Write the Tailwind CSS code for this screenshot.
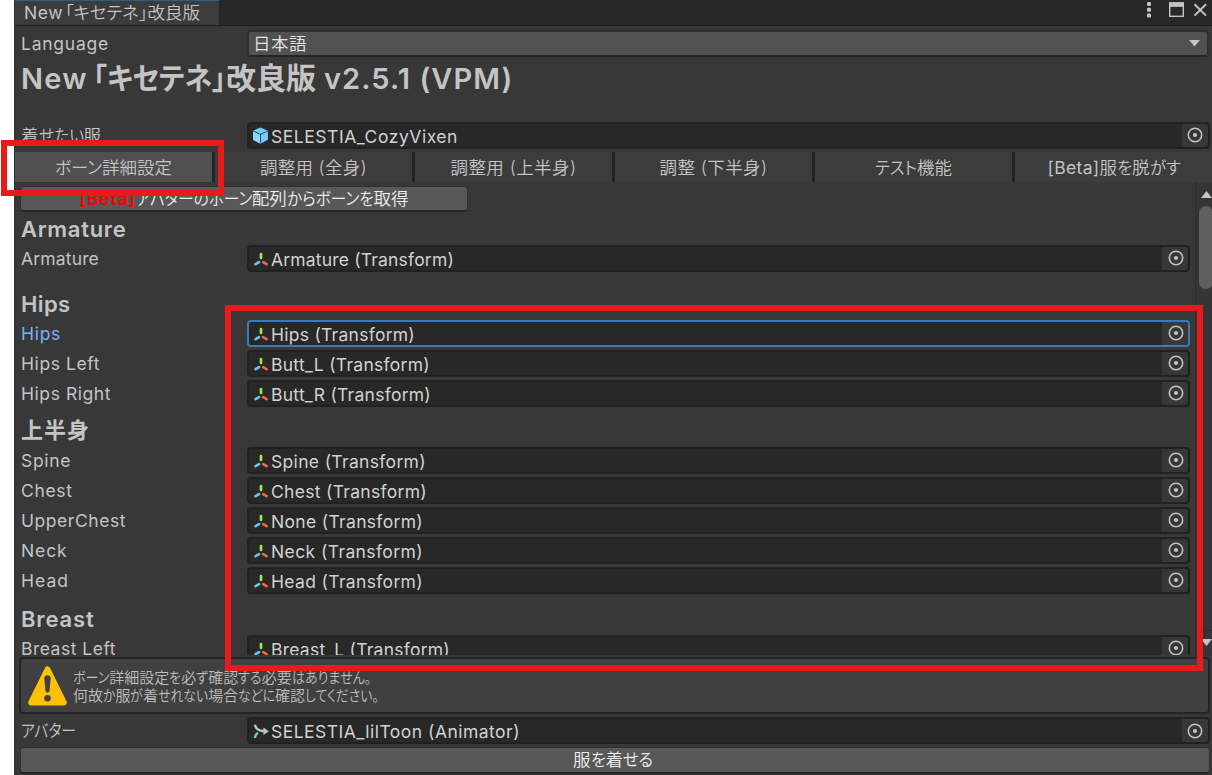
<!DOCTYPE html>
<html lang="ja">
<head>
<meta charset="utf-8">
<title>New「キセテネ」改良版</title>
<script src="https://cdn.jsdelivr.net/npm/@tailwindcss/browser@4"></script>
</head>
<body class="relative h-[775px] w-[1212px] overflow-hidden bg-white pl-[14px] font-['Inter','Noto_Sans_CJK_JP',sans-serif] text-[17.5px] leading-none text-[#c4c4c4]">

<svg class="hidden">
  <symbol id="axes" viewBox="0 0 16 16"><g fill="none" stroke-width="2.7" stroke-linecap="round"><path d="M8 3V7" stroke="#9be84e"/><path d="M6 11.2 2.6 13.200" stroke="#6cc3ee"/><path d="M10.2 11.100 13.6 13.100" stroke="#ee6a3e"/></g></symbol>
  <symbol id="cube" viewBox="0 0 16 16"><path d="M8 .4 15 3.5v8.6L8 15.8 1 12.1V3.5Z" fill="#74cdf7"/><path d="M1.4 3.9 8 7l6.6-3.1M8 7v8.4" fill="none" stroke="#2a4f66" stroke-width="1"/><path d="M1 4.4 7.5 7.5v8L1 12.1Z" fill="#8ad8fb"/></symbol>
  <symbol id="anim" viewBox="0 0 16 16"><g fill="none" stroke-width="2.4"><path d="M1.8 1.8C2.6 5 5 7.8 11 8.2" stroke="#c4c4c4"/><path d="M1.9 15c.2-2.2 1.1-4 3-5.2" stroke="#5fd9c0"/></g><path d="M10.4 4.400 15.800 8.200 10.400 12Z" fill="#c4c4c4"/></symbol>
  <symbol id="pick" viewBox="0 0 16 16"><circle cx="8" cy="8" r="6.700" fill="none" stroke="#c4c4c4" stroke-width="1.500"/><circle cx="8" cy="8" r="2.100" fill="#c4c4c4"/></symbol>
</svg>

<main class="flex h-full w-[1198px] flex-col border-l border-[#303030] bg-[#383838]">

  <header class="flex h-[26px] shrink-0 border-b border-[#202020] bg-[#282828]">
    <div class="flex w-[205px] items-center border-t border-r border-t-[#2c5d87] border-r-[#232323] bg-[#3c3c3c] pl-[9px]"><span data-w="39">New</span><span class="ml-[2px]" data-w="135">「キセテネ」改良版</span></div>
    <div class="ml-auto flex pt-[2px] pr-[4px]">
      <svg class="h-[16px] w-[64px]" viewBox="0 0 64 16"><g fill="#c4c4c4"><rect x="3" y="0" width="4" height="4" rx="1.200"/><rect x="3" y="5.700" width="4" height="4" rx="1.200"/><rect x="3" y="11.400" width="4" height="4" rx="1.200"/></g><rect x="25.700" y="1" width="13.600" height="13.300" fill="none" stroke="#c4c4c4" stroke-width="1.400"/><path d="M25 .3h15v4.600H25Z" fill="#c4c4c4"/><path d="M50.500 2.300 62 13.600M62 2.300 50.500 13.600" stroke="#c4c4c4" stroke-width="2"/></svg>
    </div>
  </header>

  <div class="mt-[4px] flex h-[27px] shrink-0 items-center pl-[6px]">
    <div class="w-[226px]"><span data-w="88">Language</span></div>
    <div class="flex h-[27px] w-[962px] items-center justify-between rounded-[4px] border-2 border-[#303030] border-b-[#242424] bg-[#515151] pr-[7px] pl-[4px] text-[#e4e4e4]"><span data-w="54">日本語</span><svg class="h-[7px] w-[11px]" viewBox="0 0 11 7"><path d="M0 0h11L5.500 6.500Z" fill="#c4c4c4"/></svg></div>
  </div>

  <h1 class="flex h-[43px] shrink-0 items-center pl-[6px] text-[29px] font-semibold"><span data-w="67">New</span><span class="ml-[5px] pb-[2px] text-[30px] font-bold" data-w="223">「キセテネ」改良版</span><span class="ml-[8px]" data-w="189">v2.5.1 (VPM)</span></h1>

  <div class="mt-[22px] flex h-[27px] shrink-0 items-center pl-[6px]">
    <div class="w-[226px] pt-px"><span data-w="80">着せたい服</span></div>
    <div class="flex h-[27px] w-[963px] items-center rounded-[4px] border-2 border-[#212121] bg-[#282828] pl-[3px] text-[#d2d2d2]"><svg class="size-[17px] shrink-0"><use href="#cube"/></svg><span class="relative top-px ml-[2px]" data-w="187">SELESTIA_CozyVixen</span><div class="ml-auto flex h-full w-[26px] items-center justify-center rounded-r-[3px] bg-[#373737] pb-px"><svg class="size-[16px]"><use href="#pick"/></svg></div></div>
  </div>

  <nav class="mt-[3px] flex h-[30px] shrink-0 bg-[#3c3c3c] pt-px">
    <div class="-mt-px flex w-[200px] items-center justify-center border-r-[3px] border-[#232323] bg-[#505050] pt-px"><span data-w="117">ボーン詳細設定</span></div>
    <div class="-mt-px flex w-[200px] items-center justify-center border-r-[3px] border-[#232323] pt-px"><span data-w="107">調整用 (全身)</span></div>
    <div class="-mt-px flex w-[200px] items-center justify-center border-r-[3px] border-[#232323] pt-px"><span data-w="126">調整用 (上半身)</span></div>
    <div class="-mt-px flex w-[200px] items-center justify-center border-r-[3px] border-[#232323] pt-px"><span data-w="108">調整 (下半身)</span></div>
    <div class="-mt-px flex w-[200px] items-center justify-center border-r-[3px] border-[#232323] pt-px"><span data-w="77">テスト機能</span></div>
    <div class="flex grow items-center justify-center pl-px"><span data-w="52">[Beta]</span><span data-w="81">服を脱がす</span></div>
  </nav>

  <section class="flex h-[473px] shrink-0 overflow-hidden">
    <div class="w-[1180px] pl-[6px]">
      <button class="mt-[4px] -ml-px flex h-[26px] w-[448px] items-center justify-center rounded-[4px] border border-b-2 border-[#303030] border-b-[#242424] bg-[#585858] text-[#eee]"><span class="font-bold text-[#f00]" data-w="56">[Beta]</span><span data-w="273">アバターのボーン配列からボーンを取得</span></button>
      <div id="bones"></div>
    </div>
    <div class="relative grow border-l-2 border-[#303030] bg-[#353535]">
      <svg class="absolute top-[9px] left-[4px] h-[7px] w-[11px]" viewBox="0 0 11 7"><path d="M0 7h11L5.500 0Z" fill="#c4c4c4"/></svg>
      <div class="absolute top-[24px] left-[2px] h-[83px] w-[14px] rounded-full bg-[#5f5f5f]"></div>
      <div class="absolute top-[448px] left-0 h-px w-full bg-[#2c2c2c]"></div>
      <svg class="absolute top-[457px] left-[4px] h-[7px] w-[11px]" viewBox="0 0 11 7"><path d="M0 0h11L5.500 7Z" fill="#c4c4c4"/></svg>
    </div>
  </section>

  <div class="mt-[2px] ml-[4px] flex h-[57px] w-[1191px] shrink-0 items-center rounded-[4px] border-2 border-[#232323] bg-[#404040] pl-[7px] text-[15px] text-[#bdbdbd]">
    <svg class="h-[40px] w-[39px] shrink-0" viewBox="0 0 39 40"><path d="M19.500 3.500 35.800 36.500H3.200Z" fill="#ffc107" stroke="#ffc107" stroke-width="6" stroke-linejoin="round"/><path d="M16.300 12.200c0-4 6.400-4 6.400 0L21.500 25c-.3 2.300-3.700 2.300-4 0Z" fill="#404040"/><circle cx="19.500" cy="32.300" r="3.300" fill="#404040"/></svg>
    <div class="ml-[6px] flex flex-col pt-[3px] leading-[18px]"><span data-w="298">ボーン詳細設定を必ず確認する必要はありません。</span><span data-w="306">何故か服が着せれない場合などに確認してください。</span></div>
  </div>

  <div class="mt-[3px] flex h-[27px] shrink-0 items-center pl-[6px]">
    <div class="w-[226px]"><span data-w="55">アバター</span></div>
    <div class="flex h-[27px] w-[963px] items-center rounded-[4px] border-2 border-[#212121] bg-[#282828] pl-[4px] text-[#d2d2d2]"><svg class="size-[16px] shrink-0"><use href="#anim"/></svg><span class="relative top-px ml-[2px]" data-w="249">SELESTIA_lilToon (Animator)</span><div class="ml-auto flex h-full w-[26px] items-center justify-center rounded-r-[3px] bg-[#373737]"><svg class="size-[16px]"><use href="#pick"/></svg></div></div>
  </div>

  <button class="mt-[3px] ml-[5px] flex h-[27px] w-[1190px] shrink-0 items-center justify-center rounded-[4px] border border-b-2 border-[#303030] border-b-[#242424] bg-[#585858] pr-[4px] text-[#eee]"><span data-w="80">服を着せる</span></button>
</main>

<div class="absolute top-[139.5px] left-[1px] h-[56px] w-[222.5px] border-[6px] border-[#e81b1b]"></div>
<div class="absolute top-[304.5px] left-[225px] h-[366.5px] w-[978px] border-[6px] border-[#e81b1b]"></div>

<script>
// Headings: [text, width]. Rows: [label, label width, object, object width, focused].
const groups = [
  { h: ['Armature', 105.5], top: 'h-[33px]', rows: [['Armature', 78, 'Armature', 183]] },
  { h: ['Hips', 49.5], top: 'h-[45px] pt-[12px]', rows: [['Hips', 40, 'Hips', 144, true], ['Hips Left', 79, 'Butt_L', 159], ['Hips Right', 90, 'Butt_R', 160]] },
  { h: ['上半身', 69], top: 'h-[37px] pt-[2px]', rows: [['Spine', 50, 'Spine', 155], ['Chest', 51.5, 'Chest', 156], ['UpperChest', 105, 'None', 152], ['Neck', 46.5, 'Neck', 152], ['Head', 48, 'Head', 152]] },
  { h: ['Breast', 73.5], top: 'h-[38px] pt-[5px]', rows: [['Breast Left', 95, 'Breast_L', 179]] },
];
document.getElementById('bones').innerHTML = groups.map(g => `
  <div class="flex ${g.top} items-center text-[22px] font-semibold"><span data-w="${g.h[1]}">${g.h[0]}</span></div>
  ${g.rows.map(r => `<div class="mb-[3px] flex h-[27px] items-center">
    <div class="w-[226px] ${r[4] ? 'text-[#7baefa]' : ''}"><span data-w="${r[1]}">${r[0]}</span></div>
    <div class="flex h-[27px] w-[943px] items-center rounded-[4px] border-2 ${r[4] ? 'border-[#3a79bb]' : 'border-[#212121]'} bg-[#282828] pl-[4px] text-[#d2d2d2]"><svg class="size-[16px] shrink-0"><use href="#axes"/></svg><span class="relative top-px ml-[2px]" data-w="${r[3]}">${r[2]} (Transform)</span><div class="ml-auto flex h-full w-[26px] items-center justify-center rounded-r-[3px] bg-[#373737] pb-px pl-[2px]"><svg class="size-[16px]"><use href="#pick"/></svg></div></div>
  </div>`).join('')}`).join('');

// Sets each text to its width: kana runs are condensed, other texts are letter-spaced.
function fit() {
  for (const el of document.querySelectorAll('[data-w]')) {
    const target = +el.dataset.w, text = el.textContent;
    el.style.width = el.style.letterSpacing = '';
    el.classList.add('whitespace-pre', 'inline-block', 'shrink-0');
    if (/[\u3000-\u9fff]/.test(text) && !el.closest('h1, .font-semibold')) el.classList.add('font-[350]');
    const range = document.createRange();
    if (/[\u3000-\u30ff]/.test(text)) {
      el.innerHTML = text.replace(/[\u3000-\u30ff]+/g, m => `<span class="inline-block origin-left [font-feature-settings:'palt']">${m}</span>`);
      range.selectNodeContents(el);
      const all = range.getBoundingClientRect().width;
      const runs = [...el.children].map(s => [s, s.getBoundingClientRect().width]);
      const kana = runs.reduce((a, r) => a + r[1], 0);
      const k = (target - all + kana) / kana;
      for (const [s, w] of runs) { s.style.width = w * k + 'px'; s.style.transform = `scaleX(${k})`; }
    } else {
      range.selectNodeContents(el);
      el.style.letterSpacing = (target - range.getBoundingClientRect().width) / text.length + 'px';
    }
    el.style.width = target + 'px';
  }
}
fit();
addEventListener('load', () => { fit(); document.fonts.ready.then(fit); });
</script>
</body>
</html>
